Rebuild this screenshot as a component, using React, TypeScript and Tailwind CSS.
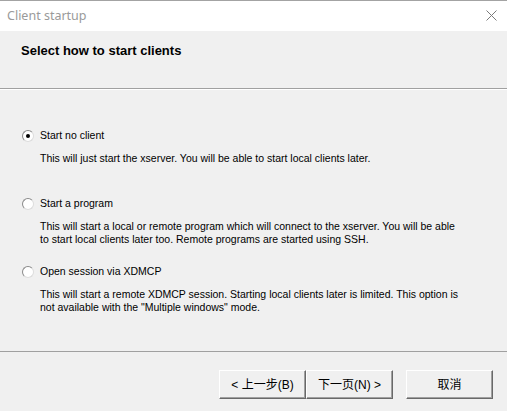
import React from "react";

type Option = {
  label: string;
  lines: string[];
  checked?: boolean;
};

const options: Option[] = [
  {
    label: "Start no client",
    lines: ["This will just start the xserver. You will be able to start local clients later."],
    checked: true,
  },
  {
    label: "Start a program",
    lines: [
      "This will start a local or remote program which will connect to the xserver. You will be able",
      "to start local clients later too. Remote programs are started using SSH.",
    ],
  },
  {
    label: "Open session via XDMCP",
    lines: [
      "This will start a remote XDMCP session. Starting local clients later is limited. This option is",
      'not available with the "Multiple windows" mode.',
    ],
  },
];

function Radio({ checked }: { checked?: boolean }) {
  return (
    <span className="relative w-[12px] h-[12px] rounded-full bg-white border border-[#8a8a8a] border-b-[#dcdcdc] border-r-[#dcdcdc] flex items-center justify-center">
      {checked && <span className="w-[4px] h-[4px] rounded-full bg-black" />}
    </span>
  );
}

function WinButton({ children }: { children: React.ReactNode }) {
  return (
    <button className="w-[87px] h-[29px] bg-[#f0f0f0] border border-t-white border-l-white border-b-[#696969] border-r-[#696969] shadow-[inset_-1px_-1px_0_#a0a0a0] text-[12px] text-black flex items-center justify-center">
      {children}
    </button>
  );
}

export default function App() {
  return (
    <div
      className="w-[507px] h-[411px] bg-[#f0f0f0] flex flex-col overflow-hidden"
      style={{ fontFamily: '"Liberation Sans", Arial, "Noto Sans CJK SC", sans-serif' }}
    >
      {/* title bar */}
      <div className="h-[31px] bg-white border-t border-[#a3a3a3] flex items-center justify-between pl-[7px] pr-[10px]">
        <span className="text-[12.5px] text-[#9a9a9a]" style={{ fontFamily: '"Noto Sans", sans-serif' }}>
          Client startup
        </span>
        <svg width="11" height="11" viewBox="0 0 11 11" className="mb-[1px]">
          <path d="M0.5 0.5 L10.5 10.5 M10.5 0.5 L0.5 10.5" stroke="#7a7a7a" strokeWidth="1" />
        </svg>
      </div>

      {/* header */}
      <div className="h-[58px] pl-[21px] pt-[10px] border-b border-[#a0a0a0]">
        <h1 className="text-[13px] font-bold text-black">Select how to start clients</h1>
      </div>
      <div className="h-px bg-white" />

      {/* options */}
      <div className="flex-1 flex flex-col pl-[22px] pt-[39px] text-[10.5px] text-black">
        {options.map((o) => (
          <div key={o.label} className="flex flex-col h-[68px]">
            <label className="flex items-center gap-[6px] h-[14px]">
              <Radio checked={o.checked} />
              <span>{o.label}</span>
            </label>
            <div className="pl-[18px] pt-[9px] leading-[13px]">
              {o.lines.map((l) => (
                <div key={l}>{l}</div>
              ))}
            </div>
          </div>
        ))}
      </div>

      {/* footer */}
      <div className="border-t border-[#a0a0a0] h-px" />
      <div className="h-[59px] flex items-start pt-[18px] pl-[219px]">
        <WinButton>&lt; 上一步(B)</WinButton>
        <WinButton>下一页(N) &gt;</WinButton>
        <div className="w-[13px]" />
        <WinButton>取消</WinButton>
      </div>
    </div>
  );
}
